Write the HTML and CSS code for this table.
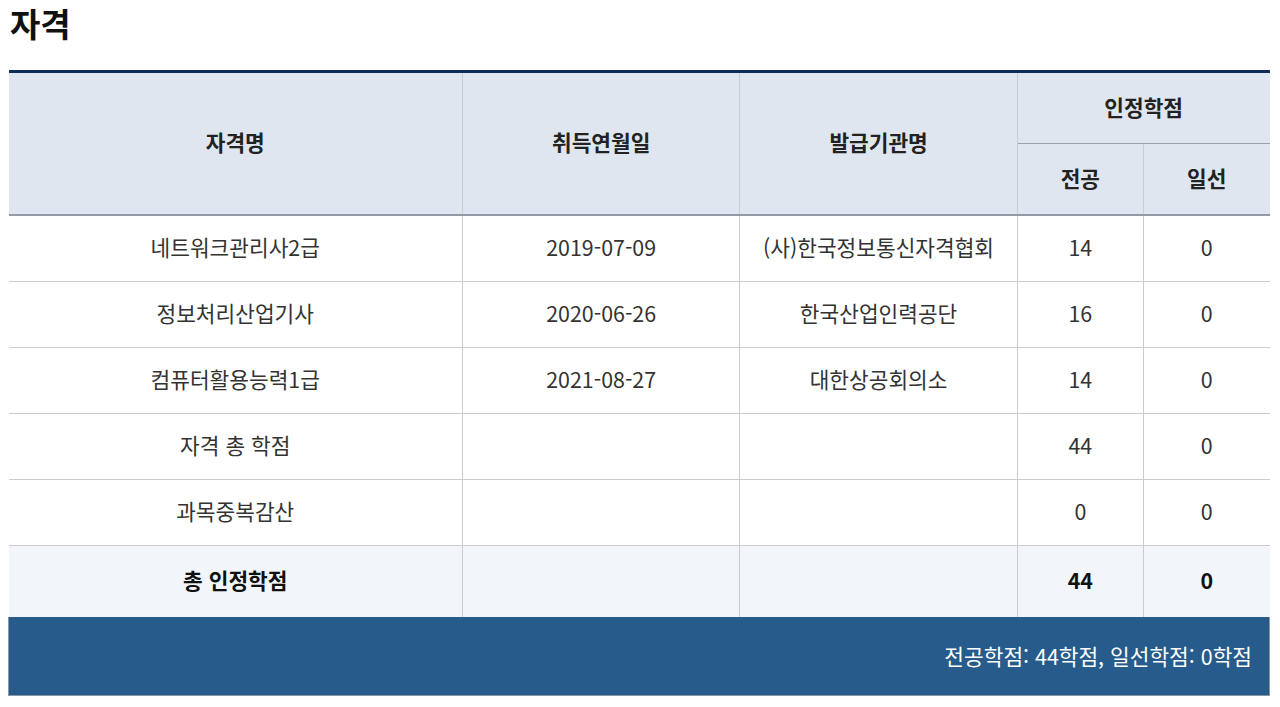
FILE: index.html
```html
<!DOCTYPE html>
<html lang="ko">
<head>
<meta charset="utf-8">
<link rel="stylesheet" href="styles.css">
</head>
<body>
<div class="page">
  <h2 class="title">자격</h2>
  <table class="cert">
    <colgroup>
      <col class="c-name">
      <col class="c-date">
      <col class="c-org">
      <col class="c-pt">
      <col class="c-pt">
    </colgroup>
    <thead>
      <tr class="h1">
        <th rowspan="2">자격명</th>
        <th rowspan="2">취득연월일</th>
        <th rowspan="2">발급기관명</th>
        <th colspan="2">인정학점</th>
      </tr>
      <tr class="h2">
        <th>전공</th>
        <th>일선</th>
      </tr>
    </thead>
    <tbody>
      <tr><td>네트워크관리사2급</td><td>2019-07-09</td><td>(사)한국정보통신자격협회</td><td>14</td><td>0</td></tr>
      <tr><td>정보처리산업기사</td><td>2020-06-26</td><td>한국산업인력공단</td><td>16</td><td>0</td></tr>
      <tr><td>컴퓨터활용능력1급</td><td>2021-08-27</td><td>대한상공회의소</td><td>14</td><td>0</td></tr>
      <tr><td>자격 총 학점</td><td></td><td></td><td>44</td><td>0</td></tr>
      <tr><td>과목중복감산</td><td></td><td></td><td>0</td><td>0</td></tr>
      <tr class="total"><td>총 인정학점</td><td></td><td></td><td>44</td><td>0</td></tr>
    </tbody>
    <tfoot>
      <tr><td colspan="5">전공학점: 44학점, 일선학점: 0학점</td></tr>
    </tfoot>
  </table>
</div>
</body>
</html>
```

FILE: styles.css
```css
html, body {
  margin: 0;
  padding: 0;
  background: #ffffff;
}
body {
  font-family: "Noto Sans CJK KR", "Noto Sans", sans-serif;
  color: #333333;
}
.page {
  padding: 0 10px 0 8px;
}
.title {
  margin: 0;
  padding-left: 2px;
  font-size: 33px;
  font-weight: 700;
  line-height: 46px;
  color: #111111;
  height: 70px;
}
.cert {
  width: 100%;
  border-collapse: collapse;
  table-layout: fixed;
  border-top: 3px solid #0e2c57;
  font-size: 21.4px;
}
.c-name { width: 36%; }
.c-date { width: 22%; }
.c-org { width: 22%; }
.c-pt { width: 10%; }
.cert th {
  background: #e0e6ef;
  color: #222222;
  font-weight: 700;
  height: 66px;
  padding: 0 0 4px 0;
  border: 1px solid #cccccc;
  border-top: none;
  text-align: center;
}
.cert thead tr.h1 th:first-child { border-left: none; }
.cert thead tr.h1 th:nth-child(4),
.cert thead tr.h2 th:last-child { border-right: none; }
.cert thead tr.h1 th:nth-child(4) { border-bottom: 1px solid #9aa1ab; }
.cert thead tr.h2 th { border-top: 1px solid #9aa1ab; }
.cert thead { border-bottom: 2px solid #939aa6; }
.cert td {
  height: 61px;
  padding: 0 0 4px 0;
  text-align: center;
  border: 1px solid #cccccc;
  color: #333333;
}
.cert tbody td:first-child { border-left: none; }
.cert tbody td:last-child { border-right: none; }
.cert tbody tr.total td {
  background: #f2f6fa;
  color: #111111;
  font-weight: 700;
  height: 67px;
  padding: 0 0 4px 0;
  border-top: 1px solid #999999;
  border-bottom: none;
}
.cert tfoot td {
  background: #265b8b;
  color: #ffffff;
  text-align: right;
  padding: 0 17px 2px 0;
  height: 76px;
  border: 1px solid #8c96a3;
  border-top: none;
}
```
